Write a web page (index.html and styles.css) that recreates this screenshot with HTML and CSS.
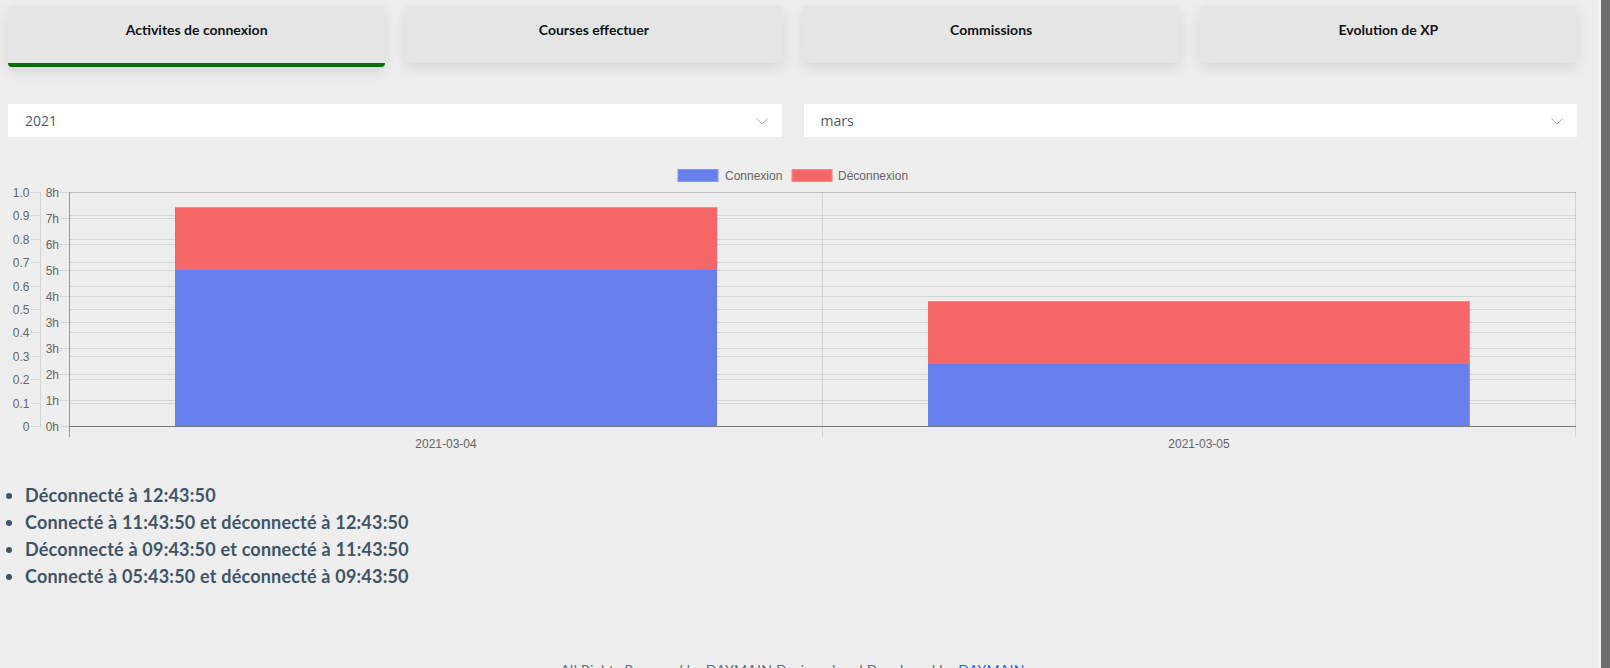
FILE: index.html
```html
<!DOCTYPE html>
<html lang="fr">
<head>
<meta charset="utf-8">
<title>Activites de connexion</title>
<link rel="stylesheet" href="styles.css">
</head>
<body>
<div class="page">
  <main class="main">
    <nav class="tabs">
      <div class="tab active">Activites de connexion</div>
      <div class="tab">Courses effectuer</div>
      <div class="tab">Commissions</div>
      <div class="tab">Evolution de XP</div>
    </nav>

    <div class="filters">
      <div class="select">
        <span class="select-value">2021</span>
        <svg class="chevron" width="12" height="7" viewBox="0 0 12 7"><polyline points="0.5,0.5 6,6 11.5,0.5" fill="none" stroke="#aab0b8" stroke-width="1"/></svg>
      </div>
      <div class="select">
        <span class="select-value">mars</span>
        <svg class="chevron" width="12" height="7" viewBox="0 0 12 7"><polyline points="0.5,0.5 6,6 11.5,0.5" fill="none" stroke="#aab0b8" stroke-width="1"/></svg>
      </div>
    </div>

    <div class="chart">
      <svg class="chart-svg" width="1569" height="300" viewBox="0 0 1569 300">
        <g class="legend">
          <rect x="670" y="14.5" width="40" height="12" fill="#6780eb" stroke="#8596ef" stroke-width="1"/>
          <text x="717" y="24.5">Connexion</text>
          <rect x="784" y="14.5" width="40" height="12" fill="#f66666" stroke="#f98585" stroke-width="1"/>
          <text x="830" y="24.5">Déconnexion</text>
        </g>

        <g class="grid" stroke="rgba(0,0,0,0.1)" stroke-width="1" shape-rendering="crispEdges">
          <line x1="61.5" x2="1567.5" y1="37.5" y2="37.5"/>
          <line x1="61.5" x2="1567.5" y1="60.5" y2="60.5"/>
          <line x1="61.5" x2="1567.5" y1="84.5" y2="84.5"/>
          <line x1="61.5" x2="1567.5" y1="107.5" y2="107.5"/>
          <line x1="61.5" x2="1567.5" y1="131.5" y2="131.5"/>
          <line x1="61.5" x2="1567.5" y1="154.5" y2="154.5"/>
          <line x1="61.5" x2="1567.5" y1="177.5" y2="177.5"/>
          <line x1="61.5" x2="1567.5" y1="201.5" y2="201.5"/>
          <line x1="61.5" x2="1567.5" y1="224.5" y2="224.5"/>
          <line x1="61.5" x2="1567.5" y1="248.5" y2="248.5"/>
          <line x1="23" x2="32" y1="37.5" y2="37.5"/>
          <line x1="23" x2="32" y1="60.5" y2="60.5"/>
          <line x1="23" x2="32" y1="84.5" y2="84.5"/>
          <line x1="23" x2="32" y1="107.5" y2="107.5"/>
          <line x1="23" x2="32" y1="131.5" y2="131.5"/>
          <line x1="23" x2="32" y1="154.5" y2="154.5"/>
          <line x1="23" x2="32" y1="177.5" y2="177.5"/>
          <line x1="23" x2="32" y1="201.5" y2="201.5"/>
          <line x1="23" x2="32" y1="224.5" y2="224.5"/>
          <line x1="23" x2="32" y1="248.5" y2="248.5"/>
          <line x1="23" x2="32" y1="271.5" y2="271.5"/>
          <line x1="32.5" x2="32.5" y1="37" y2="272"/>
          <line x1="61.5" x2="1567.5" y1="37.5" y2="37.5"/>
          <line x1="61.5" x2="1567.5" y1="63.5" y2="63.5"/>
          <line x1="61.5" x2="1567.5" y1="89.5" y2="89.5"/>
          <line x1="61.5" x2="1567.5" y1="115.5" y2="115.5"/>
          <line x1="61.5" x2="1567.5" y1="141.5" y2="141.5"/>
          <line x1="61.5" x2="1567.5" y1="167.5" y2="167.5"/>
          <line x1="61.5" x2="1567.5" y1="193.5" y2="193.5"/>
          <line x1="61.5" x2="1567.5" y1="219.5" y2="219.5"/>
          <line x1="61.5" x2="1567.5" y1="245.5" y2="245.5"/>
          <line x1="52" x2="61" y1="37.5" y2="37.5"/>
          <line x1="52" x2="61" y1="63.5" y2="63.5"/>
          <line x1="52" x2="61" y1="89.5" y2="89.5"/>
          <line x1="52" x2="61" y1="115.5" y2="115.5"/>
          <line x1="52" x2="61" y1="141.5" y2="141.5"/>
          <line x1="52" x2="61" y1="167.5" y2="167.5"/>
          <line x1="52" x2="61" y1="193.5" y2="193.5"/>
          <line x1="52" x2="61" y1="219.5" y2="219.5"/>
          <line x1="52" x2="61" y1="245.5" y2="245.5"/>
          <line x1="52" x2="61" y1="271.5" y2="271.5"/>
          <line x1="814.5" x2="814.5" y1="37" y2="282"/>
          <line x1="1567.5" x2="1567.5" y1="37" y2="282"/>
        </g>

        <g class="bars" shape-rendering="crispEdges">
          <rect x="167" y="115" width="542" height="156.5" fill="#6780eb"/>
          <rect x="167" y="52.5" width="542" height="62.5" fill="#f66666"/>
          <rect x="920" y="209" width="542" height="62.5" fill="#6780eb"/>
          <rect x="920" y="146.5" width="542" height="62.5" fill="#f66666"/>
          <line x1="1461.5" x2="1461.5" y1="209" y2="271" stroke="#8596ef"/>
          <line x1="1461.5" x2="1461.5" y1="147" y2="209" stroke="#f98585"/>
          <line x1="920" x2="1462" y1="146.5" y2="146.5" stroke="#f98585"/>
          <line x1="167" x2="709" y1="52.5" y2="52.5" stroke="#f98585"/>
        </g>

        <g class="axes" shape-rendering="crispEdges">
          <line x1="61.5" x2="61.5" y1="37" y2="282" stroke="#9a9a9a"/>
          <line x1="61" x2="1568" y1="271.5" y2="271.5" stroke="#7a7a7a"/>
        </g>

        <g class="ticks-left">
          <text x="21.5" y="41.5">1.0</text>
          <text x="21.5" y="64.5">0.9</text>
          <text x="21.5" y="88.5">0.8</text>
          <text x="21.5" y="111.5">0.7</text>
          <text x="21.5" y="135.5">0.6</text>
          <text x="21.5" y="158.5">0.5</text>
          <text x="21.5" y="181.5">0.4</text>
          <text x="21.5" y="205.5">0.3</text>
          <text x="21.5" y="228.5">0.2</text>
          <text x="21.5" y="252.5">0.1</text>
          <text x="21.5" y="275.5">0</text>
        </g>
        <g class="ticks-left">
          <text x="51" y="41.5">8h</text>
          <text x="51" y="67.5">7h</text>
          <text x="51" y="93.5">6h</text>
          <text x="51" y="119.5">5h</text>
          <text x="51" y="145.5">4h</text>
          <text x="51" y="171.5">3h</text>
          <text x="51" y="197.5">3h</text>
          <text x="51" y="223.5">2h</text>
          <text x="51" y="249.5">1h</text>
          <text x="51" y="275.5">0h</text>
        </g>
        <g class="ticks-bottom">
          <text x="438" y="292.5">2021-03-04</text>
          <text x="1191" y="292.5">2021-03-05</text>
        </g>
      </svg>
    </div>

    <ul class="log-list">
      <li>Déconnecté à 12:43:50</li>
      <li>Connecté à 11:43:50 et déconnecté à 12:43:50</li>
      <li>Déconnecté à 09:43:50 et connecté à 11:43:50</li>
      <li>Connecté à 05:43:50 et déconnecté à 09:43:50</li>
    </ul>

    <footer class="footer">All Rights Reserved by DAYMAIN Designed and Developed by <a href="#">DAYMAIN</a></footer>
  </main>
  <div class="edge"></div>
</div>
</body>
</html>
```

FILE: styles.css
```css
html, body {
  margin: 0;
  padding: 0;
  background: #eeeeee;
}

.page {
  display: flex;
  height: 668px;
  overflow: hidden;
  font-family: Lato, "Open Sans", "Liberation Sans", sans-serif;
}

.main {
  flex: 1;
  padding: 6px 21px 0 8px;
  min-width: 0;
}

.edge {
  width: 9px;
  height: 100%;
  background: #6e6e6e;
  border-left: 3px solid #f5f5f5;
}

.tabs {
  display: flex;
  gap: 20px;
  align-items: flex-start;
}

.tab {
  flex: 1;
  height: 57px;
  box-sizing: border-box;
  padding-top: 10px;
  line-height: 28px;
  text-align: center;
  font-weight: 700;
  font-size: 14px;
  color: #111418;
  background: #e5e5e5;
  border-radius: 4px;
  box-shadow: 0 5px 14px rgba(0, 0, 0, 0.10);
}

.tab.active {
  height: 61px;
  border-bottom: 4px solid #007000;
}

.filters {
  display: flex;
  gap: 22px;
  margin-top: 37px;
}

.select {
  flex: 1;
  height: 33px;
  background: #ffffff;
  display: flex;
  align-items: center;
  justify-content: space-between;
  padding: 0 14px 0 17px;
  box-sizing: border-box;
}

.select-value {
  font-family: "Open Sans", "Liberation Sans", sans-serif;
  font-size: 14px;
  color: #4f5b66;
}

.chevron {
  display: block;
  margin-top: 2px;
}

.chart {
  margin-top: 18px;
  height: 300px;
}

.chart-svg {
  display: block;
  font-family: "Liberation Sans", Arial, sans-serif;
  font-size: 12px;
  fill: #666666;
}

.legend text {
  fill: #666666;
}

.ticks-left text {
  text-anchor: end;
}

.ticks-bottom text {
  text-anchor: middle;
}

.log-list {
  margin: 27px 0 0 0;
  padding-left: 17px;
  font-size: 18px;
  line-height: 27px;
  font-weight: 700;
  letter-spacing: 0.2px;
  color: #3e5569;
}

.footer {
  margin-top: 69px;
  text-align: center;
  font-size: 14px;
  letter-spacing: 0.25px;
  line-height: 21px;
  color: #5f6f80;
}

.footer a {
  color: #2962ff;
  text-decoration: none;
}
```
